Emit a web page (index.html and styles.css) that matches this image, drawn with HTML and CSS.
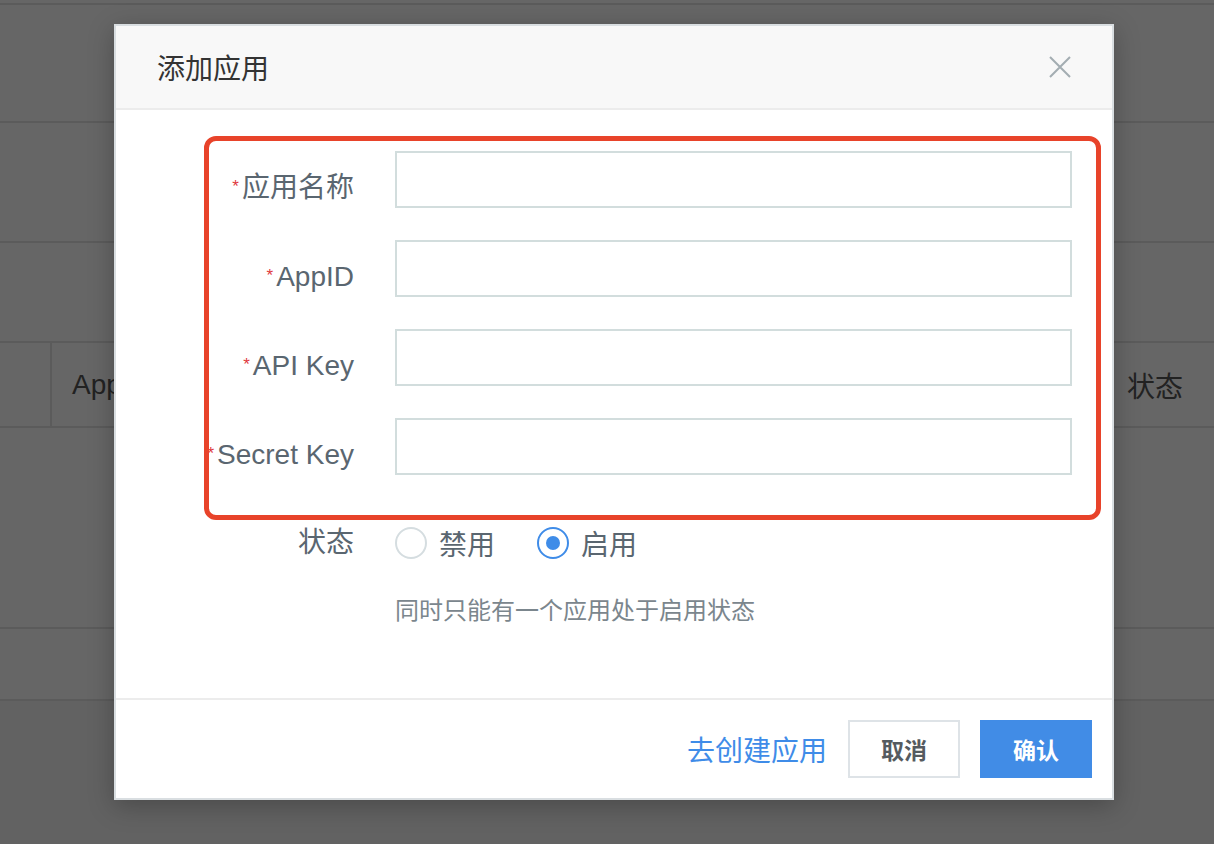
FILE: index.html
```html
<!DOCTYPE html>
<html lang="zh-CN">
<head>
<meta charset="utf-8">
<title>添加应用</title>
<link rel="stylesheet" href="styles.css">
</head>
<body>
<div class="bg-table">
  <div class="bg-row r0"></div>
  <div class="bg-row r1"></div>
  <div class="bg-row r2"></div>
  <div class="bg-row r3"></div>
  <div class="bg-row head">
    <div class="bg-cell first"></div>
    <div class="bg-cell app">AppID</div>
    <div class="bg-cell state">状态</div>
  </div>
  <div class="bg-row r5"></div>
  <div class="bg-row r6"></div>
</div>

<div class="modal">
  <div class="modal-header">
    <h2 class="modal-title">添加应用</h2>
    <button class="modal-close" type="button" aria-label="关闭">
      <svg width="22" height="22" viewBox="0 0 22 22"><path d="M1 1 L21 21 M21 1 L1 21" stroke="#a3adb2" stroke-width="2" fill="none"/></svg>
    </button>
  </div>
  <div class="modal-body">
    <div class="form-row">
      <label class="form-label"><span class="req">*</span>应用名称</label>
      <input class="form-input" type="text">
    </div>
    <div class="form-row">
      <label class="form-label"><span class="req">*</span>AppID</label>
      <input class="form-input" type="text">
    </div>
    <div class="form-row">
      <label class="form-label"><span class="req">*</span>API Key</label>
      <input class="form-input" type="text">
    </div>
    <div class="form-row">
      <label class="form-label"><span class="req">*</span>Secret Key</label>
      <input class="form-input" type="text">
    </div>
    <div class="form-row radio-row">
      <label class="form-label">状态</label>
      <div class="radio-group">
        <span class="radio"><span class="radio-circle"></span>禁用</span>
        <span class="radio checked"><span class="radio-circle"></span>启用</span>
      </div>
    </div>
    <div class="hint">同时只能有一个应用处于启用状态</div>
  </div>
  <div class="modal-footer">
    <a class="link" href="#">去创建应用</a>
    <button class="btn btn-default" type="button">取消</button>
    <button class="btn btn-primary" type="button">确认</button>
  </div>
</div>

<div class="annotation"></div>
</body>
</html>
```

FILE: styles.css
```css
* { box-sizing: border-box; }
html, body {
  margin: 0;
  padding: 0;
}
body {
  width: 1214px;
  height: 844px;
  overflow: hidden;
  background: #626262;
  font-family: "Liberation Sans", "Noto Sans CJK SC", sans-serif;
  position: relative;
}

/* background table (dimmed) */
.bg-table {
  display: flex;
  flex-direction: column;
}
.bg-row {
  background: #666666;
  border-bottom: 2px solid #5b5b5b;
}
.r0 { height: 5px; }
.r1 { height: 118px; }
.r2 { height: 120px; }
.r3 { height: 100px; }
.head {
  height: 85px;
  display: flex;
  align-items: center;
}
.r5 { height: 201px; }
.r6 { height: 72px; }
.bg-cell {
  font-size: 28px;
  color: #222;
}
.bg-cell.first {
  width: 52px;
  align-self: stretch;
  border-right: 2px solid #5b5b5b;
}
.bg-cell.app { padding-left: 20px; flex: 1; }
.bg-cell.state { padding-right: 31px; }

/* modal */
.modal {
  position: absolute;
  left: 114px;
  top: 24px;
  width: 1000px;
  height: 776px;
  background: #fff;
  border: 2px solid #d9dee1;
  box-shadow: 0 6px 24px rgba(0, 0, 0, 0.25);
  display: flex;
  flex-direction: column;
}
.modal-header {
  height: 84px;
  background: #f8f8f8;
  border-bottom: 2px solid #ececec;
  display: flex;
  align-items: center;
  justify-content: space-between;
  padding: 0 41px;
}
.modal-title {
  margin: 0;
  font-weight: normal;
  font-size: 28px;
  color: #333;
}
.modal-close {
  border: 0;
  background: none;
  padding: 0;
  width: 22px;
  height: 22px;
  display: flex;
}
.modal-body {
  flex: 1;
  padding: 41px 40px 0 0;
}
.form-row {
  display: flex;
  align-items: flex-start;
  margin-bottom: 32px;
}
.form-label {
  width: 238px;
  flex: none;
  text-align: right;
  font-size: 28px;
  line-height: 40px;
  padding-top: 16px;
  color: #5a6670;
  white-space: nowrap;
  margin-right: 41px;
}
.req {
  color: #e0393e;
  font-size: 17px;
  vertical-align: 5px;
  margin-right: 3px;
}
.form-input {
  width: 677px;
  height: 57px;
  border: 2px solid #d2dddd;
  border-radius: 0;
  outline: none;
  background: #fff;
}
.radio-row {
  margin-bottom: 0;
  height: 72px;
  align-items: center;
}
.radio-row .form-label { padding-top: 0; }
.radio-group {
  display: flex;
  align-items: center;
  gap: 42px;
}
.radio {
  display: flex;
  align-items: center;
  font-size: 28px;
  color: #5a6670;
}
.radio-circle {
  width: 32px;
  height: 32px;
  border-radius: 50%;
  border: 2px solid #d5dde0;
  margin-right: 12px;
  display: flex;
  align-items: center;
  justify-content: center;
}
.radio.checked .radio-circle {
  border-color: #3f8ce8;
}
.radio.checked .radio-circle::after {
  content: "";
  width: 14px;
  height: 14px;
  border-radius: 50%;
  background: #3f8ce8;
}
.hint {
  margin-top: 14px;
  padding-left: 279px;
  font-size: 24px;
  line-height: 36px;
  color: #7b868d;
}

.modal-footer {
  height: 100px;
  border-top: 2px solid #ececec;
  display: flex;
  align-items: center;
  justify-content: flex-end;
  padding: 0 20px 0 0;
}
.link {
  font-size: 28px;
  color: #3f8ce8;
  text-decoration: none;
  margin-right: 21px;
}
.btn {
  width: 112px;
  height: 58px;
  font-family: inherit;
  font-size: 23px;
  font-weight: bold;
  border-radius: 0;
  cursor: pointer;
}
.btn-default {
  background: #fff;
  border: 2px solid #dee3e7;
  color: #555b60;
  margin-right: 20px;
}
.btn-primary {
  background: #418ce6;
  border: 0;
  color: #fff;
}

/* red annotation box drawn over the form */
.annotation {
  position: absolute;
  left: 204px;
  top: 136px;
  width: 897px;
  height: 384px;
  border: 5px solid #e8432a;
  border-radius: 12px;
  pointer-events: none;
}
```
